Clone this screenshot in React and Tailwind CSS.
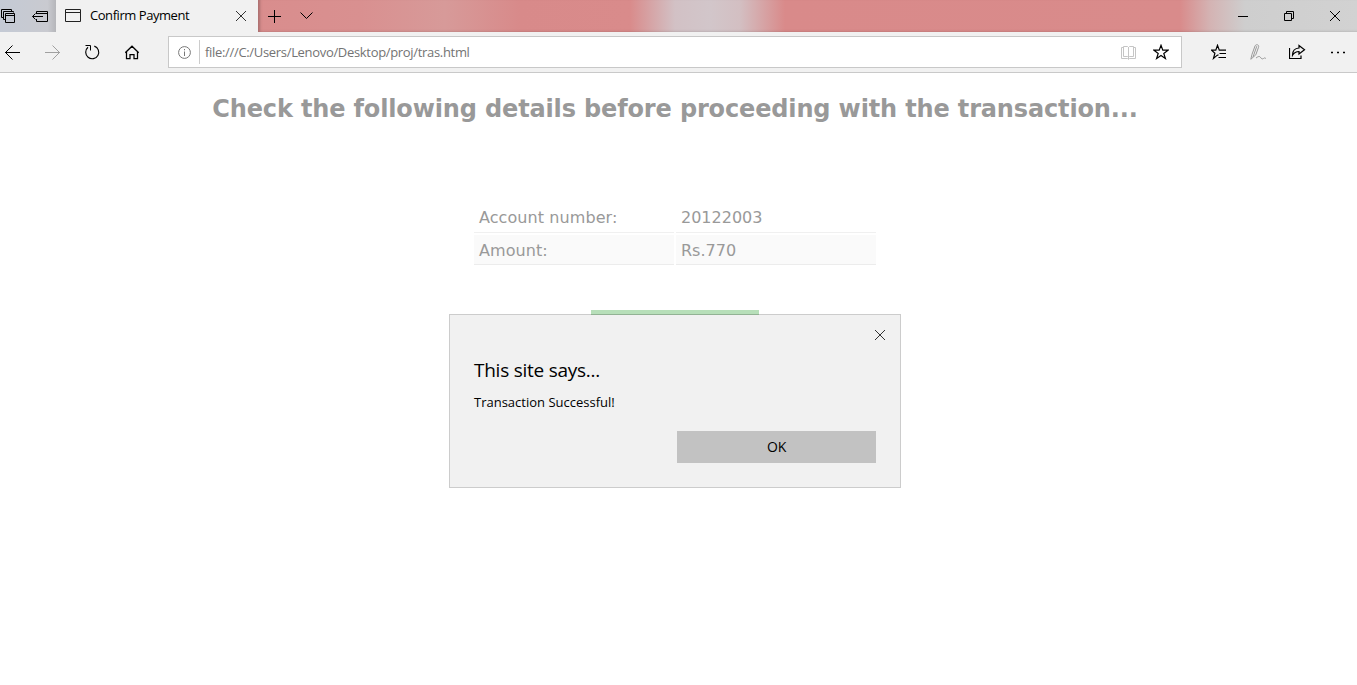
const paint = { fill: 'none', stroke: 'currentColor', strokeWidth: 1 };

function Icon({ w = 16, h = 16, className = '', children }) {
  return (
    <svg width={w} height={h} viewBox={`0 0 ${w} ${h}`} className={`block shrink-0 ${className}`} {...paint}>
      {children}
    </svg>
  );
}

function Cross({ className = '' }) {
  return (
    <Icon w={10} h={10} className={className}>
      <path d="M0 0l10 10M10 0L0 10" />
    </Icon>
  );
}

function TabBar() {
  return (
    <div className="flex h-8 bg-[linear-gradient(90deg,#d98d8d_258px,#d99090_360px,#d79a99_445px,#d88a8a_520px,#d98b8b_630px,#d2c1c5_675px,#d2c6ca_710px,#d3bfc2_740px,#d98a8a_785px,#d98b8b_1180px,#d4b3b3_1210px,#cecece_1245px,#d2d2d2_1357px)]">
      <div className="flex w-14 items-center justify-between bg-[linear-gradient(90deg,#c4cad5,#c9cad0_85%,#b5b6ba)] pr-2 text-black">
        <Icon>
          <path d="M3.500 9.500h-2v-8h10v2M5.500 11.500h-2v-8h10v1M5.500 5.500h9v9h-9zM5.500 7.500h9" />
        </Icon>
        <Icon>
          <path d="M4.500 6V3.500h11v10h-11V11M4.500 5.500h11M.5 8.500H11M3.500 5.500l-3 3 3 3" />
        </Icon>
      </div>
      <div className="flex w-[202px] items-center bg-[#f1f1f1] pl-[9px] text-black">
        <Icon>
          <path d="M.5 1.500h15v12H.5zM.5 4.500h15" stroke="#222" />
        </Icon>
        <span className="ml-[9px] w-[146px] whitespace-nowrap text-[13px] tracking-[-0.45px]">Confirm Payment</span>
        <Cross className="text-[#333]" />
      </div>
      <div className="flex flex-1 items-center pl-[10px] text-black shadow-[inset_3px_-1px_3px_-1px_rgba(0,0,0,0.22)]">
        <Icon w={13} h={13}>
          <path d="M6.500 0v13M0 6.500h13" />
        </Icon>
        <Icon w={13} h={8} className="ml-[19px]">
          <path d="M.5.500l6 6 6-6" />
        </Icon>
        <div className="ml-auto flex items-center pr-[17px]">
          <Icon w={10} h={10}>
            <path d="M0 5.500h10" />
          </Icon>
          <Icon w={10} h={10} className="ml-9">
            <path d="M.5 2.500h7v7h-7zM2.500 2.500v-2h7v7h-2" />
          </Icon>
          <Cross className="ml-9" />
        </div>
      </div>
    </div>
  );
}

const starPath = 'M8 1.300l1.800 4.900h5.200L10.800 9.400l1.600 5.100L8 11.400l-4.400 3.100 1.600-5.100L1 6.200h5.200z';

function Toolbar() {
  return (
    <div className="flex h-[41px] items-center border-b border-[#c9c9c9] bg-[#f1f1f1] pl-[5px] text-black">
      <Icon>
        <path d="M0 8.500h15M7.500 1.500l-7 7 7 7" />
      </Icon>
      <Icon className="ml-6 text-[#a0a0a0]">
        <path d="M0 8.500h15M7.500 1.500l7 7-7 7" />
      </Icon>
      <Icon className="ml-6">
        <path d="M9.300 2.100A6.500 6.500 0 1 1 3 3.300" strokeWidth="1.150" />
        <path d="M.5 1.500h5v5" />
      </Icon>
      <Icon className="ml-6">
        <path d="M.3 8.700L7 2.200l6.700 6.500M1.500 7.700v7h3.500v-4.200h4v4.200h3.500v-7" strokeWidth="1.250" />
      </Icon>
      <div className="ml-[27px] flex h-8 w-[1014px] items-center border border-[#c8c8c8] bg-white pl-[9px] text-[#777]">
        <Icon w={13} h={13}>
          <circle cx="6.500" cy="6.500" r="5.900" />
          <path d="M6.500 5.500v4.500M6.500 3v1.300" />
        </Icon>
        <div className="ml-2 h-6 w-px bg-[#ccc]" />
        <span className="ml-[5px] whitespace-nowrap pt-px text-[13px] tracking-[-0.320px] text-[#737373]">
          file:///C:/Users/Lenovo/Desktop/proj/tras.html
        </span>
        <Icon className="ml-auto text-[#c5c5c5]">
          <path d="M2.500 3.500h-2v11h6l1 1 1-1h6v-11h-2M2.500 2.500h4l1 1 1-1h4v10h-4l-1 1-1-1h-4zM7.500 3v12" />
        </Icon>
        <Icon className="ml-4 mr-[12px] text-black">
          <path d={starPath} strokeWidth="1.200" />
        </Icon>
      </div>
      <Icon className="ml-[29px]">
        <path d="M7.500 10.700L6 11.400l-3.500 3 1.400-5.200L.5 6.200h4.300L6.500 1.300l1.800 4.900H15M8.500 9.500h6.500M7.500 13.500h7.500" strokeWidth="1.200" />
      </Icon>
      <Icon w={17} className="ml-[23px] text-[#999]">
        <path d="M.8 15.300l1.200-5L5 2C6-.2 9.500.500 8.500 3.300L5.800 10.800.8 15.300M6.800 2.200L3 13M6 14c2.500-1.800 3.600-2 4.300-.8s2.200 2.300 3.200 1.300 1.700-.6 2.500.3" />
      </Icon>
      <Icon w={17} className="ml-[22px]">
        <path d="M.5 4v10.500h11.500V11.500M10 1.500l5.500 4.300L10 10V7.500C7 7.500 5 8.800 3.500 11.300 3.500 7 6 4.200 10 4z" strokeWidth="1.200" />
      </Icon>
      <Icon className="ml-6">
        <path d="M1 8.500h2M7 8.500h2M13 8.500h2" strokeWidth="1.600" />
      </Icon>
    </div>
  );
}

const details = [
  { label: 'Account number:', value: '20122003', row: 'h-[31px] border-[#f0f0f0]' },
  { label: 'Amount:', value: 'Rs.770', row: 'h-[30px] border-[#ececec] bg-[#fafafa]' },
];

export default function App() {
  return (
    <div className="relative h-[685px] w-[1357px] overflow-hidden bg-white font-['Open_Sans','Noto_Sans',sans-serif]">
      <TabBar />
      <Toolbar />
      <main className="flex flex-col items-center pr-[7px] font-['DejaVu_Sans',sans-serif] text-[#999]">
        <h1 className="mt-[18px] h-9 whitespace-nowrap text-[24px] font-bold leading-9 tracking-[-0.145px]">
          Check the following details before proceeding with the transaction...
        </h1>
        <div className="mt-[75px] flex w-[402px] flex-col gap-[2px] text-[16px]">
          {details.map(({ label, value, row }) => (
            <div key={label} className="flex gap-[2px]">
              <div className={`flex-1 border-b pl-[5px] leading-[31px] tracking-[0.080px] ${row}`}>{label}</div>
              <div className={`flex-1 border-b pl-[5px] leading-[31px] ${row}`}>{value}</div>
            </div>
          ))}
        </div>
        <div className="mt-[45px] h-10 w-[168px] bg-[#b7dfb9]" />
      </main>
      <div className="absolute left-[449px] top-[314px] flex h-[174px] w-[452px] flex-col border border-black/20 bg-[#f1f1f1] bg-clip-padding px-6 text-black">
        <Cross className="-mr-[9px] ml-auto mt-[15px] text-[#333]" />
        <h2 className="mt-4 h-7 text-[19px] leading-7 tracking-[-0.250px]">This site says...</h2>
        <p className="mt-2 h-5 text-[13px] leading-5">Transaction Successful!</p>
        <button className="ml-auto mt-[19px] h-8 w-[199px] bg-[#c2c2c2] pb-px text-[14px] tracking-[-0.300px]">OK</button>
      </div>
    </div>
  );
}
